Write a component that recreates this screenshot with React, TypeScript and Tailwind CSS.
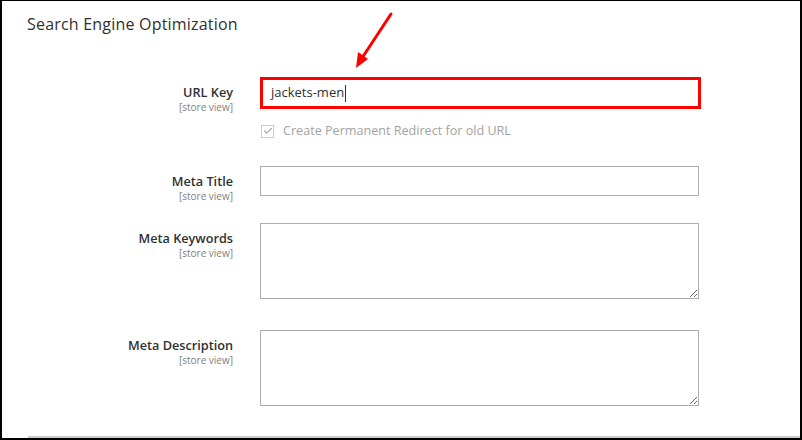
import { Check } from 'lucide-react';

const font = { fontFamily: '"Open Sans", sans-serif' };

function FieldLabel({ text }: { text: string }) {
  return (
    <div className="w-[206px] shrink-0 text-right pt-[6px]">
      <div className="text-[12.7px] leading-[18px] font-semibold text-[#303030]">{text}</div>
      <div className="text-[10px] leading-[12px] text-[#808080]">[store view]</div>
    </div>
  );
}

export default function App() {
  return (
    <div
      className="relative w-[802px] h-[440px] bg-white border-2 border-t border-black overflow-hidden"
      style={font}
    >
      {/* Pointer arrow */}
      <svg className="absolute left-0 top-0" width="802" height="440">
        <line x1="389" y1="13" x2="360" y2="57" stroke="#ff0000" strokeWidth="3" strokeLinecap="round" />
        <polygon points="354,67 356,51 366,58" fill="#ff0000" />
      </svg>

      <div className="pl-[25px] pt-[13px]">
        <h2 className="text-[16px] leading-[20px] font-medium text-[#303030] tracking-[0.2px]">
          Search Engine Optimization
        </h2>

        {/* URL Key */}
        <div className="flex gap-[27px] mt-[43px]">
          <FieldLabel text="URL Key" />
          <div className="w-[441px] h-[32px] border-[3px] border-[#ff0000] flex items-center pl-[8px] text-[13px] text-[#303030]">
            jackets-men
            <span className="inline-block w-px h-[17px] bg-[#303030] ml-px" />
          </div>
        </div>

        <div className="flex gap-[27px] mt-[8px]">
          <div className="w-[206px] shrink-0" />
          <div className="flex items-center gap-[9px] pl-px">
            <div className="w-[13px] h-[13px] border border-[#cccccc] flex items-center justify-center bg-white">
              <Check className="w-[10px] h-[10px] text-[#aaaaaa]" strokeWidth={3} />
            </div>
            <span className="text-[12.6px] leading-[20px] text-[#a3a3a3]">Create Permanent Redirect for old URL</span>
          </div>
        </div>

        {/* Meta Title */}
        <div className="flex gap-[27px] mt-[25px]">
          <FieldLabel text="Meta Title" />
          <div className="w-[439px] h-[30px] border border-[#adadad]" />
        </div>

        {/* Meta Keywords */}
        <div className="flex gap-[27px] mt-[21px]">
          <FieldLabel text="Meta Keywords" />
          <textarea className="block w-[439px] h-[76px] border border-[#adadad] outline-none" readOnly />
        </div>

        {/* Meta Description */}
        <div className="flex gap-[27px] mt-[31px]">
          <FieldLabel text="Meta Description" />
          <textarea className="block w-[439px] h-[76px] border border-[#adadad] outline-none" readOnly />
        </div>

        <div className="mt-[30px] ml-[1px] h-[2px] bg-[#cccccc]" />
      </div>
    </div>
  );
}
